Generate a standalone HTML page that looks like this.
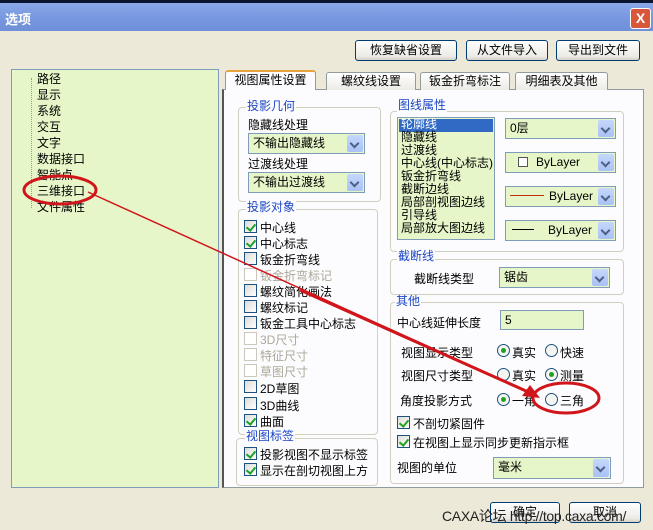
<!DOCTYPE html>
<html><head><meta charset="utf-8"><style>
*{box-sizing:border-box;margin:0;padding:0}
body{width:653px;height:530px;overflow:hidden;background:#ece9d8;font-family:"Liberation Sans","Noto Sans CJK SC","WenQuanYi Zen Hei",sans-serif;font-size:12px;color:#000;position:relative}
.a{position:absolute;white-space:nowrap}
.title{left:0;top:0;width:653px;height:31px;background:linear-gradient(#8aa9ea,#7898e0 50%,#6f8fd8);border-top:3px solid #0a1530}
.btn{position:absolute;border:1px solid #003c74;border-radius:3px;background:linear-gradient(#fff,#ecebe6 80%,#d6d0c5);text-align:center;line-height:19px;font-size:12px}
.grp{position:absolute;border:1px solid #d0d0bf;border-radius:4px}
.gl{position:absolute;background:#fcfcfe;color:#1c47c4;padding:0 1px;line-height:13px}
.cb{position:absolute;width:13px;height:13px;border:1px solid #1c5180;background:linear-gradient(135deg,#dcdcd7,#fff)}
.cb.on::after{content:"";position:absolute;left:3px;top:1px;width:4px;height:7px;border:solid #21a121;border-width:0 2px 2px 0;transform:rotate(40deg)}
.cb.dis{border-color:#cac8bb;background:#fff}
.cmb{position:absolute;border:1px solid #7f9db9;background:#e6f6c9;line-height:18px;padding-left:4px;overflow:hidden}
.cmb::after{content:"";position:absolute;right:1px;top:1px;bottom:1px;width:16px;background:linear-gradient(#c5d7fb,#a9c1f5);border-radius:2px}
.cmb::before{content:"";position:absolute;right:6px;top:50%;margin-top:-4px;width:5px;height:5px;border:solid #4d6185;border-width:0 2px 2px 0;transform:rotate(45deg);z-index:2}
.rd{position:absolute;width:13px;height:13px;border:1px solid #1c5180;border-radius:50%;background:#f4f4f0}
.rd.on::after{content:"";position:absolute;left:3px;top:3px;width:5px;height:5px;border-radius:50%;background:#21a121}
.tab{position:absolute;top:72px;height:18px;border:1px solid #919b9c;border-bottom:none;background:linear-gradient(#fff,#ecebe6);text-align:center;line-height:17px;border-radius:3px 3px 0 0}
</style></head><body>
<div class="a title"></div>
<div class="a" style="left:5px;top:9px;color:#fff;font-weight:bold;font-size:13px">选项</div>
<div class="a" style="left:630px;top:8px;width:21px;height:21px;border:1px solid #fff;border-radius:3px;background:#d8573a;color:#fff;text-align:center;font-weight:bold;line-height:19px;font-size:14px">X</div>
<div class="btn" style="left:355px;top:40px;width:102px;height:21px">恢复缺省设置</div>
<div class="btn" style="left:466px;top:40px;width:82px;height:21px">从文件导入</div>
<div class="btn" style="left:556px;top:40px;width:84px;height:21px">导出到文件</div>

<div class="a" style="left:11px;top:69px;width:208px;height:419px;border:1px solid #7f9db9;background:#e6f6c9"></div>
<div class="a" style="left:31px;top:78px;height:130px;border-left:1px dotted #999"></div>
<div class="a" style="left:37px;top:71px;line-height:16px">路径<br>显示<br>系统<br>交互<br>文字<br>数据接口<br>智能点<br>三维接口<br>文件属性</div>

<div class="a" style="left:222px;top:89px;width:422px;height:399px;border:1px solid #919b9c;background:#fcfcfe;border-left:2px solid #555"></div>
<div class="tab" style="left:225px;width:91px;top:70px;height:20px;background:#fcfcfe;border-top:2px solid #e8a33c">视图属性设置</div>
<div class="tab" style="left:326px;width:90px">螺纹线设置</div>
<div class="tab" style="left:420px;width:90px">钣金折弯标注</div>
<div class="tab" style="left:515px;width:93px">明细表及其他</div>

<div class="grp" style="left:238px;top:107px;width:143px;height:95px"></div>
<div class="gl" style="left:246px;top:100px">投影几何</div>
<div class="a" style="left:248px;top:116px">隐藏线处理</div>
<div class="cmb" style="left:248px;top:133px;width:117px;height:21px">不输出隐藏线</div>
<div class="a" style="left:248px;top:155px">过渡线处理</div>
<div class="cmb" style="left:248px;top:172px;width:117px;height:21px">不输出过渡线</div>

<div class="grp" style="left:238px;top:209px;width:140px;height:226px"></div>
<div class="gl" style="left:246px;top:201px">投影对象</div>
<div class="grp" style="left:236px;top:438px;width:142px;height:48px"></div>
<div class="gl" style="left:245px;top:430px">视图标签</div>

<div class="cb on" style="left:244px;top:220px"></div><div class="a" style="left:260px;top:219px">中心线</div>
<div class="cb on" style="left:244px;top:236px"></div><div class="a" style="left:260px;top:235px">中心标志</div>
<div class="cb" style="left:244px;top:252px"></div><div class="a" style="left:260px;top:251px">钣金折弯线</div>
<div class="cb dis" style="left:244px;top:268px"></div><div class="a" style="left:260px;top:267px;color:#aca899">钣金折弯标记</div>
<div class="cb" style="left:244px;top:284px"></div><div class="a" style="left:260px;top:283px">螺纹简化画法</div>
<div class="cb" style="left:244px;top:300px"></div><div class="a" style="left:260px;top:299px">螺纹标记</div>
<div class="cb" style="left:244px;top:316px"></div><div class="a" style="left:260px;top:315px">钣金工具中心标志</div>
<div class="cb dis" style="left:244px;top:332px"></div><div class="a" style="left:260px;top:331px;color:#aca899">3D尺寸</div>
<div class="cb dis" style="left:244px;top:348px"></div><div class="a" style="left:260px;top:347px;color:#aca899">特征尺寸</div>
<div class="cb dis" style="left:244px;top:364px"></div><div class="a" style="left:260px;top:363px;color:#aca899">草图尺寸</div>
<div class="cb" style="left:244px;top:380px"></div><div class="a" style="left:260px;top:380px">2D草图</div>
<div class="cb" style="left:244px;top:397px"></div><div class="a" style="left:260px;top:397px">3D曲线</div>
<div class="cb on" style="left:244px;top:414px"></div><div class="a" style="left:260px;top:413px">曲面</div>
<div class="cb on" style="left:244px;top:447px"></div><div class="a" style="left:260px;top:446px">投影视图不显示标签</div>
<div class="cb on" style="left:244px;top:463px"></div><div class="a" style="left:260px;top:462px">显示在剖切视图上方</div>

<div class="grp" style="left:390px;top:111px;width:234px;height:141px"></div>
<div class="gl" style="left:397px;top:99px">图线属性</div>
<div class="a" style="left:397px;top:117px;width:98px;height:123px;border:1px solid #7f9db9;background:#e6f6c9"></div>
<div class="a" style="left:399px;top:119px;width:94px;height:13px;background:#316ac5"></div>
<div class="a" style="left:401px;top:118px;line-height:13px;font-size:12px"><span style="color:#fff">轮廓线</span><br>隐藏线<br>过渡线<br>中心线(中心标志)<br>钣金折弯线<br>截断边线<br>局部剖视图边线<br>引导线<br>局部放大图边线</div>
<div class="cmb" style="left:505px;top:118px;width:111px;height:21px">0层</div>
<div class="cmb" style="left:505px;top:152px;width:111px;height:21px"><span style="display:inline-block;width:10px;height:10px;border:1px solid #555;background:#fff;margin:0 8px 0 8px;vertical-align:-1px"></span>ByLayer</div>
<div class="cmb" style="left:505px;top:186px;width:111px;height:21px;padding-left:2px"><span style="display:inline-block;width:34px;border-top:1px solid #c03000;margin:0 5px 0 2px;vertical-align:4px"></span>ByLayer</div>
<div class="cmb" style="left:505px;top:220px;width:111px;height:21px;padding-left:2px"><span style="display:inline-block;width:22px;border-top:1px solid #000;margin:0 14px 0 4px;vertical-align:4px"></span>ByLayer</div>

<div class="grp" style="left:390px;top:259px;width:234px;height:36px"></div>
<div class="gl" style="left:397px;top:250px">截断线</div>
<div class="a" style="left:414px;top:270px">截断线类型</div>
<div class="cmb" style="left:499px;top:267px;width:111px;height:21px">锯齿</div>

<div class="grp" style="left:390px;top:302px;width:234px;height:182px"></div>
<div class="gl" style="left:395px;top:295px">其他</div>
<div class="a" style="left:397px;top:314px">中心线延伸长度</div>
<div class="a" style="left:500px;top:310px;width:84px;height:20px;border:1px solid #7f9db9;background:#e6f6c9;padding-left:4px;line-height:18px">5</div>
<div class="a" style="left:401px;top:344px">视图显示类型</div>
<div class="rd on" style="left:497px;top:344px"></div><div class="a" style="left:512px;top:344px">真实</div>
<div class="rd" style="left:545px;top:344px"></div><div class="a" style="left:560px;top:344px">快速</div>
<div class="a" style="left:401px;top:367px">视图尺寸类型</div>
<div class="rd" style="left:497px;top:368px"></div><div class="a" style="left:512px;top:367px">真实</div>
<div class="rd on" style="left:545px;top:368px"></div><div class="a" style="left:560px;top:367px">测量</div>
<div class="a" style="left:400px;top:392px">角度投影方式</div>
<div class="rd on" style="left:497px;top:393px"></div><div class="a" style="left:512px;top:392px">一角</div>
<div class="rd" style="left:545px;top:393px"></div><div class="a" style="left:560px;top:392px">三角</div>
<div class="cb on" style="left:397px;top:416px"></div><div class="a" style="left:413px;top:415px">不剖切紧固件</div>
<div class="cb on" style="left:397px;top:435px"></div><div class="a" style="left:413px;top:434px">在视图上显示同步更新指示框</div>
<div class="a" style="left:397px;top:459px">视图的单位</div>
<div class="cmb" style="left:493px;top:457px;width:118px;height:22px">毫米</div>

<div class="btn" style="left:490px;top:502px;width:70px;height:21px">确定</div>
<div class="btn" style="left:569px;top:502px;width:72px;height:21px">取消</div>
<div class="a" style="left:442px;top:506px;font-size:14px;letter-spacing:-0.3px;color:#222">CAXA论坛 http://top.caxa.com/</div>

<svg class="a" style="left:0;top:0" width="653" height="530">
<ellipse cx="60" cy="190" rx="36" ry="14" fill="none" stroke="#d0161a" stroke-width="3"/>
<ellipse cx="566" cy="398" rx="33" ry="15" fill="none" stroke="#d0161a" stroke-width="3"/>
<path d="M88 192 L535 395" stroke="#d0161a" stroke-width="1.5"/>
<path d="M300 290 L535 395" stroke="#d0161a" stroke-width="3"/>
<path d="M540 398 L522 396 L530 385 Z" fill="#d0161a"/>
</svg>
</body></html>
